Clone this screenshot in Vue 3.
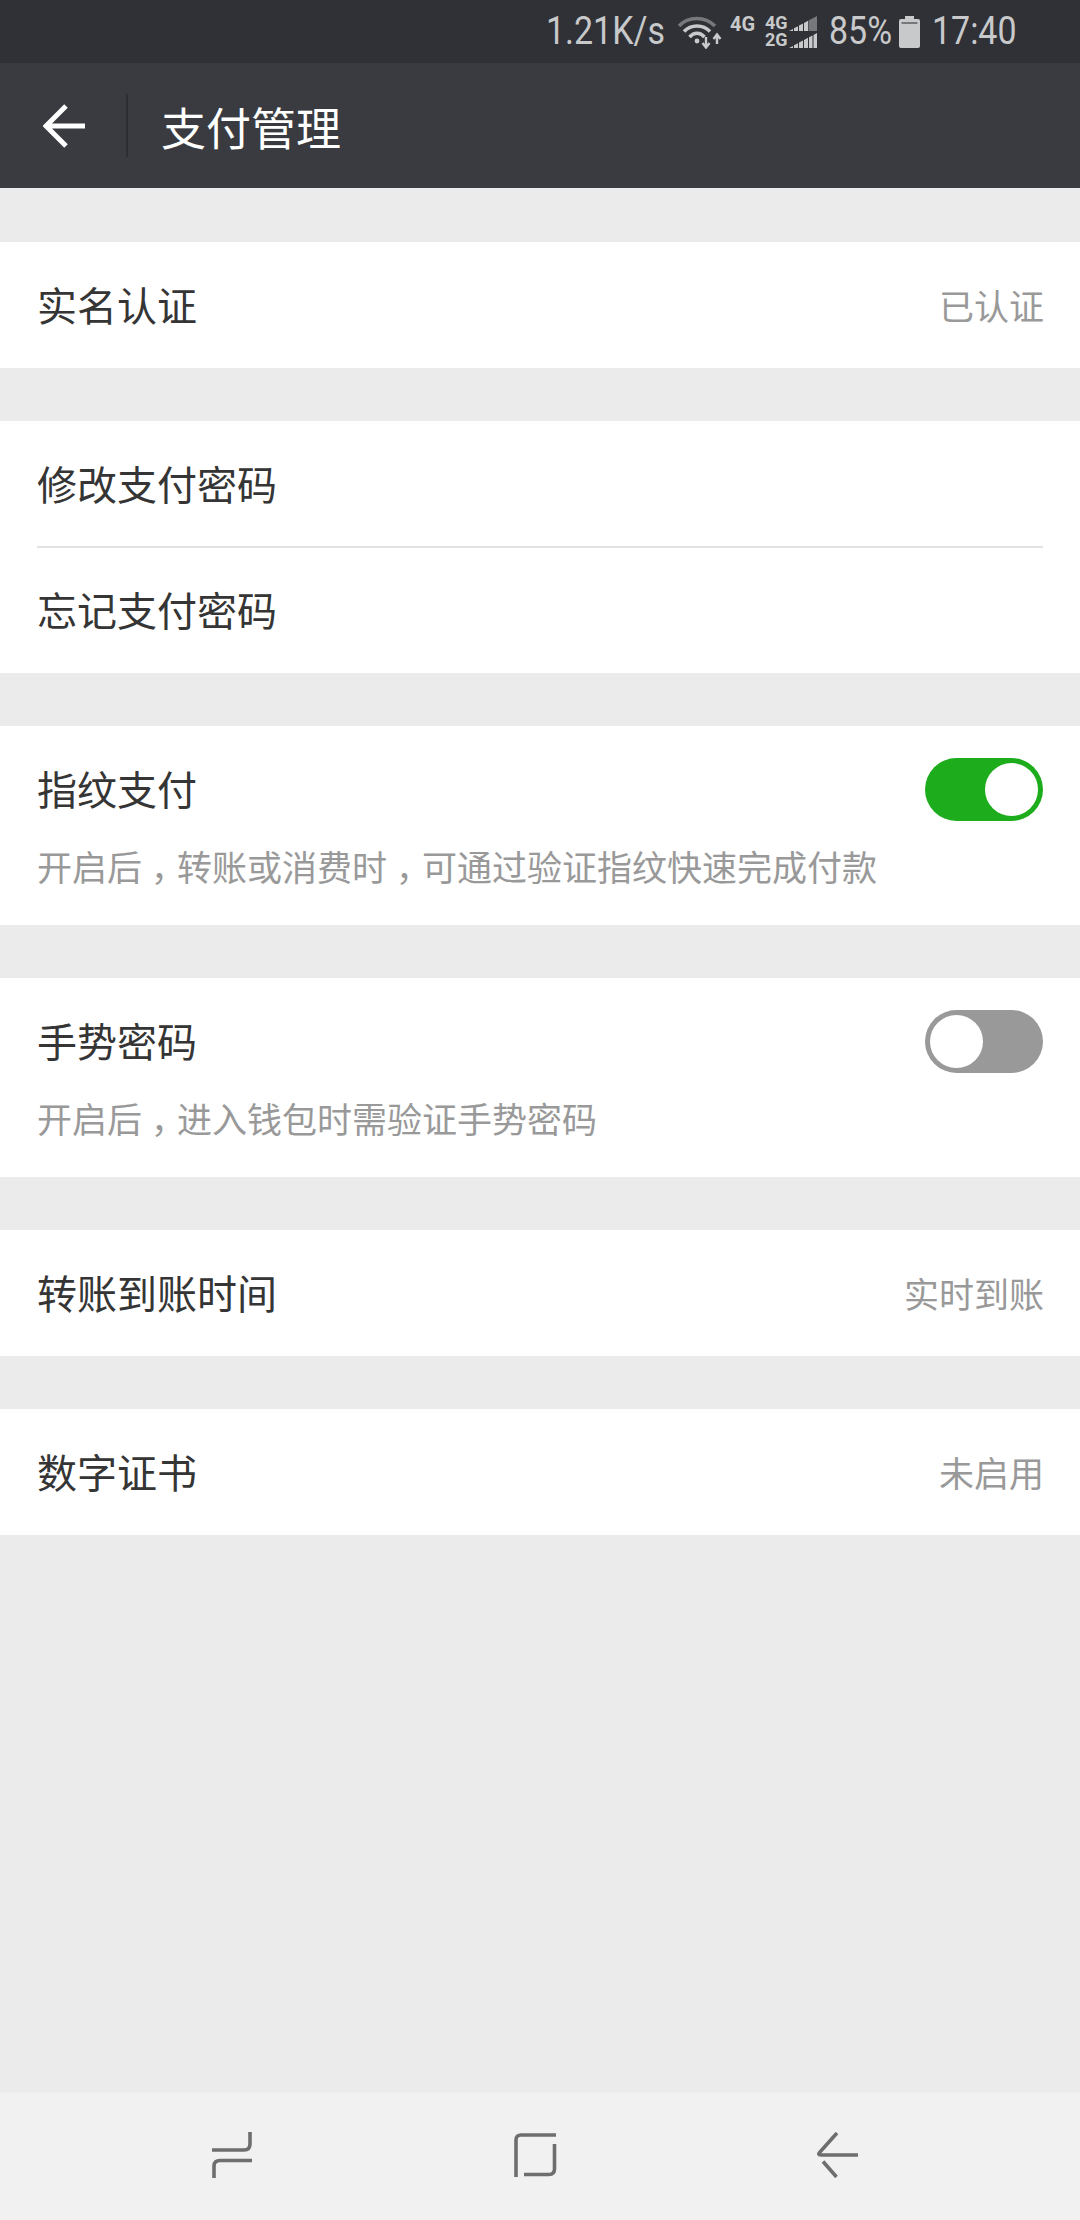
<template>
  <div class="page">
    <div class="status-bar">
      <span class="st-text speed">1.21K/s</span>
      <svg class="wifi" width="44" height="34" viewBox="0 0 44 34">
        <path d="M1 11 C10 1 27 1 37 11" fill="none" stroke="#77787b" stroke-width="3.5" />
        <path d="M6 16.5 C13 9 25 9 32 16.5" fill="none" stroke="#c8c9cb" stroke-width="3.5" />
        <path d="M11.5 22 C16 17 22 17 26.5 22" fill="none" stroke="#c8c9cb" stroke-width="3.5" />
        <circle cx="19" cy="26" r="2.4" fill="#c8c9cb" />
        <path d="M28 22 V31 M24.5 28 L28 32.5 L31.5 28 M39 29 V20 M35.5 24 L39 19.5 L42.5 24" fill="none" stroke="#c8c9cb" stroke-width="2.4" />
      </svg>
      <span class="net-label single">4G</span>
      <div class="sim">
        <div class="sim-row">
          <span class="net-label">4G</span>
          <svg width="28" height="15" viewBox="0 0 28 15">
            <path d="M0 15 V15 L4 12.9 V15 Z M5 15 V12.3 L9 10.2 V15 Z M10 15 V9.6 L14 7.5 V15 Z M15 15 V7 L19 4.8 V15 Z" fill="#c8c9cb" />
            <path d="M19.5 15 V4.5 L28 0 V15 Z" fill="#77787b" />
          </svg>
        </div>
        <div class="sim-row">
          <span class="net-label">2G</span>
          <svg width="28" height="15" viewBox="0 0 28 15">
            <path d="M0 15 V15 L4 12.9 V15 Z M5 15 V12.3 L9 10.2 V15 Z M10 15 V9.6 L14 7.5 V15 Z M15 15 V7 L19 4.8 V15 Z M20 15 V4.3 L23.5 2.4 V15 Z M24.5 15 V1.9 L28 0 V15 Z" fill="#c8c9cb" />
          </svg>
        </div>
      </div>
      <span class="st-text percent">85%</span>
      <svg class="battery" width="21" height="32" viewBox="0 0 21 32">
        <path d="M6 0 H15 V3 H19 Q21 3 21 5 V30 Q21 32 19 32 H2 Q0 32 0 30 V5 Q0 3 2 3 H6 Z" fill="#c8c9cb" />
        <rect x="2.5" y="6" width="16" height="2" fill="#77787b" />
      </svg>
      <span class="st-text clock">17:40</span>
    </div>

    <div class="title-bar">
      <svg class="back" width="44" height="44" viewBox="0 0 44 44">
        <path d="M23 2 L3 22 L23 42 M3 22 H42" fill="none" stroke="#fff" stroke-width="5" />
      </svg>
      <i class="title-line"></i>
      <span class="title">支付管理</span>
    </div>

    <div class="content">
      <div class="group">
        <div class="cell">
          <span class="cell-label">实名认证</span>
          <span class="cell-value">已认证</span>
        </div>
      </div>

      <div class="group">
        <div class="cell">
          <span class="cell-label">修改支付密码</span>
        </div>
        <div class="cell-divider"></div>
        <div class="cell">
          <span class="cell-label">忘记支付密码</span>
        </div>
      </div>

      <div v-for="item in switches" :key="item.label" class="group switch-group">
        <div class="switch-row">
          <span class="cell-label">{{ item.label }}</span>
          <div class="switch" :class="{ on: item.on }"><i class="knob"></i></div>
        </div>
        <div class="cell-desc">
          <template v-for="(part, i) in item.desc" :key="i"><span v-if="i > 0" class="comma">，</span>{{ part }}</template>
        </div>
      </div>

      <div class="group">
        <div class="cell">
          <span class="cell-label">转账到账时间</span>
          <span class="cell-value">实时到账</span>
        </div>
      </div>

      <div class="group">
        <div class="cell">
          <span class="cell-label">数字证书</span>
          <span class="cell-value">未启用</span>
        </div>
      </div>
    </div>

    <div class="nav-bar">
      <div class="nav-item">
        <svg width="42" height="46" viewBox="0 0 42 46">
          <path d="M38 0 V12 Q38 18 32 18 H0 M40 28.5 H8 Q2 28.5 2 34 V46" fill="none" stroke="#6e6e6e" stroke-width="3.6" />
        </svg>
      </div>
      <div class="nav-item">
        <svg width="43" height="44" viewBox="0 0 43 44">
          <path d="M2 44 V7 Q2 2 7 2 H42 M40.5 11 V36 Q40.5 41.5 35 41.5 H10" fill="none" stroke="#6e6e6e" stroke-width="3.6" />
        </svg>
      </div>
      <div class="nav-item">
        <svg width="41" height="46" viewBox="0 0 41 46">
          <path d="M20 1 L3 20 Q0 23 4 23 H41 M6 29.5 L19.5 45" fill="none" stroke="#6e6e6e" stroke-width="3.6" />
        </svg>
      </div>
    </div>
  </div>
</template>

<script setup>
const switches = [
  { label: '指纹支付', desc: ['开启后', '转账或消费时', '可通过验证指纹快速完成付款'], on: true },
  { label: '手势密码', desc: ['开启后', '进入钱包时需验证手势密码'], on: false }
];
</script>

<style>
body {
  margin: 0;
}
</style>

<style scoped>
.page {
  width: 1080px;
  height: 2220px;
  display: flex;
  flex-direction: column;
  background-color: #ebebeb;
  font-family: "Noto Sans CJK SC", "Noto Sans", sans-serif;
  overflow: hidden;
}

.status-bar {
  height: 63px;
  flex-shrink: 0;
  display: flex;
  align-items: center;
  padding-left: 546px;
  background-color: #303136;
  color: #c8c9cb;
}

.st-text {
  display: inline-block;
  font-family: Roboto, sans-serif;
  font-size: 39px;
  line-height: 63px;
  white-space: nowrap;
  transform: scaleX(0.87);
  transform-origin: left center;
}

.speed {
  width: 132px;
}

.wifi {
  width: 44px;
  margin-right: 8px;
}

.net-label {
  font-family: Roboto, sans-serif;
  font-size: 20px;
  font-weight: 700;
  line-height: 16px;
}

.single {
  width: 25px;
  margin-right: 10px;
  margin-bottom: 16px;
}

.sim {
  width: 52px;
  display: flex;
  flex-direction: column;
  gap: 2px;
  margin-right: 12px;
}

.sim-row {
  display: flex;
  align-items: flex-end;
  gap: 2px;
  height: 15px;
}

.sim-row .net-label {
  width: 22px;
  font-size: 18px;
}

.percent {
  width: 70px;
}

.battery {
  margin-right: 12px;
}

.clock {
  width: 84px;
}

.title-bar {
  height: 125px;
  flex-shrink: 0;
  display: flex;
  align-items: center;
  background-color: #3a3b40;
}

.back {
  margin-left: 43px;
}

.title-line {
  width: 2px;
  height: 63px;
  margin-left: 39px;
  background-color: #2d2e32;
}

.title {
  margin-left: 33px;
  margin-top: 2px;
  font-size: 45px;
  color: #fff;
}

.content {
  flex: 1;
  display: flex;
  flex-direction: column;
  gap: 53px;
  padding-top: 54px;
}

.group {
  background-color: #fff;
}

.cell {
  height: 126px;
  box-sizing: border-box;
  display: flex;
  align-items: center;
  justify-content: space-between;
  padding: 0 36px 2px 37px;
}

.cell-label {
  font-size: 40px;
  color: #353535;
}

.cell-value {
  font-size: 35px;
  color: #999;
}

.cell-divider {
  height: 2px;
  margin: -1px 37px;
  background-color: #e2e2e2;
}

.switch-group {
  height: 199px;
  box-sizing: border-box;
  padding: 32px 37px 0;
}

.switch-row {
  display: flex;
  align-items: center;
  justify-content: space-between;
  height: 63px;
}

.switch-row .cell-label {
  margin-top: -3px;
}

.switch {
  width: 118px;
  height: 63px;
  box-sizing: border-box;
  padding: 5px;
  display: flex;
  border-radius: 32px;
  background-color: #999;
}

.switch.on {
  justify-content: flex-end;
  background-color: #1dac1c;
}

.knob {
  width: 53px;
  height: 53px;
  border-radius: 50%;
  background-color: #fff;
}

.cell-desc {
  margin-top: 20px;
  font-size: 35px;
  line-height: 50px;
  color: #999;
}

.comma {
  padding: 0 8.75px;
  font-feature-settings: "halt";
}

.nav-bar {
  height: 127px;
  flex-shrink: 0;
  display: flex;
  padding: 0 91px 0 82px;
  border-top: 1px solid #eeeeee;
  background-color: #f1f1f1;
}

.nav-item {
  flex: 1;
  display: flex;
  align-items: center;
  justify-content: center;
  padding-bottom: 3px;
}
</style>
